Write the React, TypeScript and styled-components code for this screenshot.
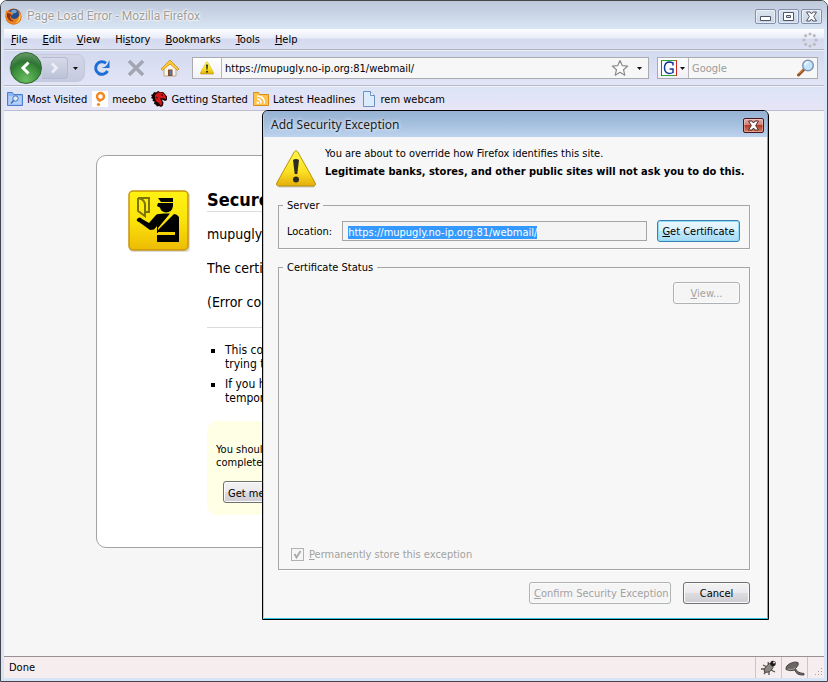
import React, { useEffect, useRef } from "react";
import styled, { createGlobalStyle, css } from "styled-components";

const uiFont = '"DejaVu Sans Condensed", "DejaVu Sans", sans-serif';

const GlobalStyle = createGlobalStyle`
  *, *::before, *::after { box-sizing: border-box; }
  body { margin: 0; background: #fff; font: 11px/14px ${uiFont}; color: #000; }
  button, input { font: inherit; color: inherit; margin: 0; padding: 0; }
  p, h1, h2, ul { margin: 0; padding: 0; }
`;

const Window = styled.div`
  position: relative;
  display: flex;
  flex-direction: column;
  min-height: 100vh;
  padding: 0 3px 3px;
  border: 1px solid #45454a;
  border-radius: 7px 7px 0 0;
  background: #d5e4f6;
  overflow: hidden;
`;

const TitleBar = styled.header`
  display: flex;
  align-items: center;
  gap: 5px;
  height: 28px;
  margin: 0 -3px;
  padding: 2px 5px 0 4px;
  background: linear-gradient(#bdc9da, #ccd8e8 55%, #d9e6f6);
`;

const WindowTitle = styled.h1`
  flex: 1;
  font: 12px/16px Roboto, "Noto Sans", sans-serif;
  color: #9d9d9a;
  text-shadow: 0 0 3px #fff, 0 0 3px #fff, 0 0 2px #fff;
`;

const WindowControls = styled.div`
  display: flex;
  gap: 2px;
`;

const ControlButton = styled.button<{ $close?: boolean }>`
  display: grid;
  place-items: center;
  width: 21px;
  height: 15px;
  border: 1px solid ${(p) => (p.$close ? "#47141c" : "#8290ac")};
  border-radius: 2px;
  background: ${(p) =>
    p.$close
      ? "linear-gradient(#e9aaa3, #d27e73 45%, #b53a25 50%, #d57a60)"
      : "linear-gradient(#dbe3ef, #c9d5e6)"};
  box-shadow: inset 0 0 0 1px ${(p) => (p.$close ? "#ffffff50" : "#ffffff80")};
`;

const MenuBar = styled.nav`
  display: flex;
  align-items: center;
  gap: 15px;
  height: 21px;
  padding: 2px 6px 0 7px;
  background: linear-gradient(#fdfdff, #e9ecf8 45%, #d4d9ee 50%, #dadff2);
  border-bottom: 1px solid #adb0b8;
`;

const MenuItem = styled.button`
  border: 0;
  background: none;
  white-space: nowrap;
`;

const Spacer = styled.span`
  flex: 1;
`;

const Toolbar = styled.div`
  display: flex;
  align-items: center;
  height: 36px;
  padding: 0 6px 0 5px;
  background: linear-gradient(#d3daef, #e2e5f6);
  border-top: 1px solid #eef0fa;
  border-bottom: 1px solid #b6b9c6;
`;

const NavGroup = styled.div`
  display: flex;
  align-items: center;
  height: 28px;
  width: 76px;
  border: 1px solid #c3c8db;
  border-radius: 14px 8px 8px 14px;
  background: linear-gradient(#d2d6e8, #c5cbe0);
`;

const NavButton = styled.button<{ $kind?: "back" | "forward" | "menu" }>`
  display: grid;
  place-items: center;
  flex: none;
  border: 0;
  background: none;
  width: 34px;
  height: 28px;
  ${(p) =>
    p.$kind === "back" &&
    css`
      width: 32px;
      height: 32px;
      border: 1px solid #2c6430;
      border-radius: 50%;
      background: radial-gradient(circle at 50% 90%, #6bbd62, #3c8f3c 45%, #2f7533 60%, #83ac80);
    `}
  ${(p) =>
    p.$kind === "forward" &&
    css`
      width: 26px;
      height: 22px;
      border: 1px solid #b4bbd0;
      border-left: 0;
      border-radius: 0 4px 4px 0;
      background: linear-gradient(#d5d9e8, #bcc3d8);
    `}
  ${(p) =>
    p.$kind === "menu" &&
    css`
      width: 15px;
    `}
`;

const Field = styled.div<{ $grow?: boolean }>`
  display: flex;
  align-items: stretch;
  height: 22px;
  min-width: 0;
  flex: ${(p) => (p.$grow ? "1 1 0" : "0 0 161px")};
  margin-left: ${(p) => (p.$grow ? "5px" : "8px")};
  border: 1px solid #a9abb0;
  background: #f7f7f7;
`;

const FieldButton = styled.button<{ $divider?: boolean; $width?: string }>`
  display: flex;
  align-items: center;
  justify-content: center;
  gap: 3px;
  flex: none;
  width: ${(p) => p.$width ?? "22px"};
  border: 0;
  border-right: ${(p) => (p.$divider ? "1px solid #b5b7bd" : "0")};
  background: ${(p) => (p.$divider ? "linear-gradient(#fff, #f2f0f8)" : "none")};
`;

const FieldInput = styled.input`
  flex: 1;
  min-width: 0;
  width: 0;
  border: 0;
  outline: 0;
  padding: 2px 3px 0;
  background: none;
  &::placeholder {
    color: #9b9b98;
    opacity: 1;
  }
`;

const Bookmarks = styled.nav`
  display: flex;
  align-items: center;
  gap: 5px;
  height: 25px;
  padding: 0 3px;
  background: linear-gradient(#dbe4f6, #e7e5f6);
  border-top: 1px solid #f3f4fb;
  border-bottom: 1px solid #bcbfd2;
`;

const Bookmark = styled.a`
  display: flex;
  align-items: center;
  gap: 4px;
  color: #000;
  text-decoration: none;
  white-space: nowrap;

  span {
    padding-top: 2px;
  }
`;

const Page = styled.main`
  flex: 1;
  padding: 44px 92px;
  background: #f6f6f6;
`;

const ErrorCard = styled.section`
  display: flex;
  gap: 17px;
  min-height: 393px;
  padding: 34px 31px 0;
  border: 1px solid #a3a3a3;
  border-radius: 10px;
  background: #fff;
`;

const ErrorContent = styled.div`
  flex: 1;
  min-width: 0;
  overflow: hidden;
  white-space: nowrap;
  font-size: 14px;
  line-height: 18px;
`;

const ErrorTitle = styled.h2`
  margin-bottom: 13px;
  font-size: 18px;
  line-height: 20px;
  padding-bottom: 1px;
  border-bottom: 1px solid #dcdcdc;
`;

const ErrorText = styled.p`
  margin-bottom: 16px;
`;

const Advice = styled.ul`
  margin-top: 14px;
  padding: 15px 0 0 18px;
  border-top: 1px solid #dcdcdc;
  list-style: square;
  font-size: 12px;
  line-height: 14px;

  li + li {
    margin-top: 6px;
  }
`;

const Caution = styled.div`
  margin-top: 16px;
  padding: 22px 9px 12px;
  border-radius: 10px;
  background: #ffffe5;
  font-size: 11px;
  line-height: 13px;
`;

const ButtonRow = styled.div<{ $end?: boolean }>`
  display: flex;
  justify-content: ${(p) => (p.$end ? "flex-end" : "space-between")};
  gap: 12px;
  margin: ${(p) => (p.$end ? "12px 0 0" : "12px 7px 0")};
`;

const PushButton = styled.button<{ $primary?: boolean; $width?: string }>`
  flex: none;
  height: 22px;
  width: ${(p) => p.$width ?? "auto"};
  padding: 2px 4px 0;
  white-space: nowrap;
  border: 1px solid ${(p) => (p.$primary ? "#3c7fb1" : "#707070")};
  border-radius: 3px;
  background: ${(p) =>
    p.$primary
      ? "linear-gradient(#eaf6fd, #dcf1fc 48%, #bfe7fb 52%, #a9dcf6)"
      : "linear-gradient(#f3f3f3, #ebe9ee 48%, #dddce1 52%, #cfcdd3)"};
  box-shadow: inset 0 0 0 1px ${(p) => (p.$primary ? "#8fdcf8" : "#fbfbfb")};

  &:disabled {
    color: #a2a2a0;
    border-color: #adb2b5;
    background: #f6f5f6;
  }
`;

const StatusBar = styled.footer`
  display: flex;
  align-items: stretch;
  height: 22px;
  padding-left: 5px;
  border-top: 1px solid #989094;
  background: #f6edef;
  line-height: 22px;
`;

const StatusCell = styled.span<{ $grip?: boolean }>`
  display: grid;
  place-items: ${(p) => (p.$grip ? "end" : "center")};
  width: ${(p) => (p.$grip ? "17px" : "26px")};
  border-left: 1px solid #ccc4c8;
`;

const Dialog = styled.section`
  position: absolute;
  top: 109px;
  left: 261px;
  width: 507px;
  padding: 0 1px 1px;
  border: 1px solid #000;
  border-radius: 6px 6px 0 0;
  background: #f7f7f7;
  box-shadow: inset 1px 0 #b5cdea, inset -1px -1px #2fc3e2;
  overflow: hidden;
`;

const DialogTitleBar = styled.header`
  display: flex;
  align-items: center;
  height: 26px;
  padding: 2px 3px 0 7px;
  background: linear-gradient(#96b2d2, #a5bfde 50%, #bdd3ef);
`;

const DialogTitle = styled.h2`
  flex: 1;
  font: 12px/16px "Noto Sans", "Open Sans", sans-serif;
  color: #1c1c24;
  text-shadow: 0 0 4px #ffffffb0, 0 0 4px #ffffffb0;
`;

const DialogBody = styled.div`
  padding: 8px 17px 14px 14px;
`;

const Notice = styled.div`
  display: flex;
  gap: 9px;
  height: 53px;
  white-space: nowrap;
`;

const NoticeText = styled.div`
  line-height: 18px;
`;

const WarningSlot = styled.div`
  padding-top: 4px;
  margin-left: -2px;
`;

const GroupBox = styled.fieldset<{ $tall?: boolean }>`
  min-width: 0;
  margin: 0 0 ${(p) => (p.$tall ? "0" : "11px")};
  padding: ${(p) => (p.$tall ? "8px 9px 7px" : "8px 9px 6px")};
  border: 1px solid #a5a5a5;
  box-shadow: 1px 1px #fff;

  legend {
    margin-left: -5px;
    padding: 0 4px;
    height: 14px;
    line-height: 16px;
  }
`;

const LocationRow = styled.div`
  display: flex;
  align-items: center;
  gap: 10px;

  label {
    margin-left: -1px;
    padding-top: 2px;
  }
`;

const LocationInput = styled.input`
  flex: 1;
  min-width: 0;
  height: 20px;
  padding: 2px 5px 0;
  border: 1px solid #a5a5a5;
  outline: 0;
  background: #f4f4f4;
  &::selection {
    color: #fff;
    background: #3399ff;
  }
`;

const StatusArea = styled.div`
  display: flex;
  flex-direction: column;
  align-items: flex-end;
  justify-content: space-between;
  min-height: 280px;
`;

const CheckLabel = styled.label`
  display: flex;
  align-items: center;
  align-self: flex-start;
  gap: 5px;
  margin-left: 3px;
  color: #a2a2a0;

  span {
    padding-top: 2px;
  }
`;

const CheckInput = styled.input`
  appearance: none;
  width: 13px;
  height: 13px;
  border: 1px solid #b1b1b1;
  background: #f6f6f6
    url("data:image/svg+xml,%3Csvg xmlns='http://www.w3.org/2000/svg' viewBox='0 0 11 11'%3E%3Cpath d='M2.500 5l2 3.500L8.500 2' fill='none' stroke='%23aaa8ae' stroke-width='1.800'/%3E%3C/svg%3E")
    center / 11px 11px no-repeat;
`;

const Caret = () => (
  <svg width="5" height="3" viewBox="0 0 5 3" aria-hidden="true">
    <path d="M0 0h5L2.500 3z" fill="#111" />
  </svg>
);

const FirefoxIcon = () => (
  <svg width="17" height="17" viewBox="0 0 17 17" aria-hidden="true">
    <circle cx="8.500" cy="8.500" r="8" fill="#c65a16" />
    <circle cx="9" cy="7" r="6" fill="#244c8c" />
    <path d="M6 3q3-2.500 6 0l-1 2-3 .5-1 2z" fill="#6aa5d4" />
    <path d="M1 2l1.500 2Q4 3 6 4l2 1.500L7 7 5.500 8q.5 3 4 3 4-.5 4.500-4 0-3-1.500-4.500Q17 5 16.300 10 15 16 8.500 16.500 1 16 .5 9 .3 5 1 2z" fill="#e98225" />
    <path d="M2 5l3 .5L7 7 5 8q0 4 4 5-5 1-7-4z" fill="#8f2f14" />
    <path d="M15.500 6q1 7-5 9.500 3.500-3 3.800-7z" fill="#ffd14a" />
  </svg>
);

const CrossGlyph = ({ fill = "#fff", stroke = "#50566a" }) => (
  <svg width="13" height="11" viewBox="0 0 13 11" aria-hidden="true">
    <path d="M1.500 1H5l1.500 2L8 1h3.500L8.700 5.500l2.800 4.500H8L6.500 8 5 10H1.500l2.800-4.500z" fill={fill} stroke={stroke} />
  </svg>
);

const WarningIcon = ({ size = 40 }: { size?: number }) => (
  <svg width={size} height={size} viewBox="0 0 40 40" aria-hidden="true">
    <defs>
      <linearGradient id="warn" x1="0" y1="0" x2="0" y2="1">
        <stop offset="0" stopColor="#fff84a" />
        <stop offset="0.600" stopColor="#fbe022" />
        <stop offset="1" stopColor="#e2ad0a" />
      </linearGradient>
    </defs>
    <path d="M2 36.500h37l-1 2H3z" fill="#00000030" />
    <path d="M18.200 3q1.800-3 3.600 0L39 33.500q1.500 3.500-2 3.500H3q-3.500 0-2-3.500z" fill="url(#warn)" stroke="#b8930c" />
    <path d="M17 11q3-2 6 0l-1.700 14h-2.600z" fill="#2e2c22" />
    <circle cx="20" cy="30.500" r="3" fill="#2e2c22" />
  </svg>
);

const Throbber = () => (
  <svg width="16" height="16" viewBox="0 0 16 16" fill="#bcbcc0" aria-hidden="true">
    <circle cx="8" cy="2" r="1.600" />
    <circle cx="12.300" cy="3.700" r="1.600" />
    <circle cx="14" cy="8" r="1.600" />
    <circle cx="12.300" cy="12.300" r="1.600" />
    <circle cx="8" cy="14" r="1.600" />
    <circle cx="3.700" cy="12.300" r="1.600" />
    <circle cx="2" cy="8" r="1.600" />
    <circle cx="3.700" cy="3.700" r="1.600" />
  </svg>
);

const ChevronIcon = ({ right = false }) => (
  <svg width="16" height="16" viewBox="0 0 16 16" aria-hidden="true">
    <path
      d={right ? "M5 3.500L9.500 8 5 12.500" : "M10.500 2.500L5 8l5.500 5.500"}
      fill="none"
      stroke={right ? "#eef0f8" : "#fff"}
      strokeWidth={right ? 2.5 : 3}
    />
  </svg>
);

const ReloadIcon = () => (
  <svg width="18" height="18" viewBox="0 0 18 18" aria-hidden="true">
    <path d="M13 4.200A6.300 6.300 0 1 0 14.500 12" fill="none" stroke="#1d6fd6" strokeWidth="3" />
    <path d="M16.500 1v8H8.700q4-1 5.300-3z" fill="#1d6fd6" />
  </svg>
);

const StopIcon = () => (
  <svg width="18" height="18" viewBox="0 0 18 18" aria-hidden="true">
    <path d="M2 2l14 14M16 2L2 16" stroke="#a3a6b2" strokeWidth="3.500" />
  </svg>
);

const HomeIcon = () => (
  <svg width="20" height="18" viewBox="0 0 20 18" aria-hidden="true">
    <path d="M4 8.500L10 3l6 5.500v8.500H4z" fill="#f7f4ee" stroke="#b7a98e" />
    <path d="M8 17v-6.500h4.500V17z" fill="#8a4b22" />
    <path d="M9.500 11.500h2V16h-2z" fill="#5b7db5" />
    <path d="M1 10l9-9 9 9-1.500 1.300L10 5l-7.500 6.300z" fill="#ffc938" stroke="#c88a16" strokeWidth=".8" />
  </svg>
);

const StarIcon = () => (
  <svg width="18" height="18" viewBox="0 0 18 18" aria-hidden="true">
    <path d="M9 1.500l2.200 5.100 5.500.5-4.200 3.600 1.300 5.500L9 13.300l-4.800 2.900 1.300-5.500L1.300 7.100l5.500-.5z" fill="#fbfbfb" stroke="#8b8b8b" strokeWidth="1.200" strokeLinejoin="round" />
  </svg>
);

const GoogleIcon = () => (
  <svg width="16" height="16" viewBox="0 0 16 16" aria-hidden="true">
    <path d="M0 0h16v16H0z" fill="#fff" />
    <path d="M.5 0v16" stroke="#2b5bd0" />
    <path d="M0 .5h15" stroke="#2fa52f" />
    <path d="M15.500 0v16" stroke="#d8251c" />
    <path d="M1 15.500h14" stroke="#2fa52f" />
    <path d="M12 5.500V3q-2-1-4-1-4.500.5-4.500 5.800T8 13.500q2.500 0 4-1V9H8.500" fill="none" stroke="#15379e" strokeWidth="1.500" />
  </svg>
);

const SearchIcon = () => (
  <svg width="18" height="18" viewBox="0 0 18 18" aria-hidden="true">
    <path d="M1.500 16L7 10.500" stroke="#9c5322" strokeWidth="3" strokeLinecap="round" />
    <path d="M2 14.500l4-4" stroke="#e49545" strokeWidth="1" />
    <circle cx="11" cy="6.500" r="5.300" fill="#c3e6fb" stroke="#7f95b8" strokeWidth="1.500" />
    <path d="M8 6q.5-3 3.500-3" fill="none" stroke="#fff" strokeWidth="1.500" />
  </svg>
);

const MostVisitedIcon = () => (
  <svg width="16" height="16" viewBox="0 0 16 16" aria-hidden="true">
    <path d="M.5 1.500h5l1 2h9v11H.5z" fill="#8fb7ef" stroke="#4a7ed0" />
    <path d="M1.500 5h13v8.500h-13z" fill="#b4d0f7" />
    <circle cx="8.500" cy="7.500" r="2.700" fill="#dcebfc" stroke="#3f70c0" />
    <path d="M6.500 9.500L4 12.500" stroke="#3f70c0" strokeWidth="1.500" />
  </svg>
);

const MeeboIcon = () => (
  <svg width="16" height="16" viewBox="0 0 16 16" aria-hidden="true">
    <path d="M0 0h16v16H0z" fill="#fff" />
    <circle cx="8.500" cy="5.500" r="3.500" fill="none" stroke="#f5871f" strokeWidth="2.400" />
    <path d="M5.500 8.500l3 2" stroke="#f5871f" strokeWidth="2" />
    <circle cx="6.500" cy="13.500" r="1.600" fill="#f5871f" />
  </svg>
);

const DragonIcon = () => (
  <svg width="16" height="16" viewBox="0 0 16 16" aria-hidden="true">
    <path d="M0 4l2-1 1-2 2 .5L7 0l2 1 3 0 2 2 2 2.500V9l-2 1-3-1.500.5 1.500 1 1.500-.5 3-2 1.500-2-1-2 .5-1.500-2L3 13l.5-2.500-2-.5.5-2L0 7l1-1.500z" fill="#1b0504" />
    <path d="M4 4l3-2.500h4L14 4l1 2.500V8l-3.500-1L9 7.500 10.500 10l.5 3-1.500 1.500L8 12 5.500 10.500 4 8z" fill="#d3171b" />
    <path d="M10 4h2M5 6l2 1.500" stroke="#1b0504" />
  </svg>
);

const FeedIcon = () => (
  <svg width="16" height="16" viewBox="0 0 16 16" aria-hidden="true">
    <path d="M.5 1.500h5l1 2h9v11H.5z" fill="#ffc24d" stroke="#d98e1c" />
    <path d="M4 8q4 0 4 4.500M4 5q7.500 0 7.500 7.500" fill="none" stroke="#fff" strokeWidth="1.500" />
    <circle cx="4.800" cy="11.700" r="1.200" fill="#fff" />
  </svg>
);

const PageIcon = () => (
  <svg width="16" height="16" viewBox="0 0 16 16" aria-hidden="true">
    <path d="M2.500.5h7l4 4v11h-11z" fill="#dcecfd" stroke="#6c8fc4" />
    <path d="M9.500.5v4h4" fill="#fff" stroke="#6c8fc4" />
  </svg>
);

const InspectorIcon = () => (
  <svg width="62" height="62" viewBox="0 0 62 62" aria-hidden="true">
    <defs>
      <linearGradient id="sign" x1="0" y1="0" x2="0" y2="1">
        <stop offset="0" stopColor="#fff314" />
        <stop offset="0.500" stopColor="#fbe30a" />
        <stop offset="1" stopColor="#edbb04" />
      </linearGradient>
    </defs>
    <rect x="1" y="2" width="61" height="60" rx="4" fill="#00000022" />
    <rect x="1" y="1" width="59" height="59" rx="4" fill="url(#sign)" stroke="#c8950f" strokeWidth="1.500" />
    <g fill="none" stroke="#7d7406" strokeWidth="2">
      <path d="M14 8h7v14h-5" />
      <path d="M10 8v13l7 5V14q-1-5-7-6h4" />
    </g>
    <path d="M30 8h15v4H33zM30 13h15v3q-1 6.500-7 6.500-5-.5-6-5l-3-1.500z" fill="#000" />
    <path d="M9 29q3-3 5 0l7 4 7-8q2-1.500 8-1.500h6L30 38v5h-1V36l-3 3.500-4 .5-11-8q-3-1-2-3z" fill="#000" />
    <path d="M46 24q3 0 5 3v25H29v-7h18v-3H29v-1z" fill="#000" />
  </svg>
);

const BugIcon = () => (
  <svg width="18" height="18" viewBox="0 0 18 18" aria-hidden="true">
    <path d="M3 6l4 2M1 10l5 0M4 15l3-4M8 3l1 4M9 16v-4M15 13l-4-2" stroke="#55524f" strokeWidth="1.300" />
    <path d="M4.500 13Q3 9 9.500 4.500q4 0 3.500 4-3 6-8.500 4.500z" fill="#8b867f" stroke="#4a4640" />
    <circle cx="13" cy="4.500" r="2.700" fill="#1d1b1a" />
    <circle cx="14" cy="3.500" r=".9" fill="#fff" />
  </svg>
);

const HatIcon = () => (
  <svg width="20" height="16" viewBox="0 0 20 16" aria-hidden="true">
    <path d="M1 9.500Q0 6 5 3.500 10 1 13 2.500q1.500 2-2.500 6 1.500 4.500 8.500 5v1.500q-8 .5-9-5-5 1.500-9-.5z" fill="#6b6764" stroke="#4a4644" />
    <path d="M3 9q5 1.500 7.500-1.500" fill="none" stroke="#aaa5a2" />
  </svg>
);

const GripIcon = () => (
  <svg width="10" height="10" viewBox="0 0 10 10" fill="#aaa2a6" aria-hidden="true">
    <path d="M7 0h1v1H7zM4 3h1v1H4zM7 3h1v1H7zM1 6h1v1H1zM4 6h1v1H4zM7 6h1v1H7z" />
  </svg>
);

const menus: [string, string, string][] = [
  ["", "F", "ile"],
  ["", "E", "dit"],
  ["", "V", "iew"],
  ["Hi", "s", "tory"],
  ["", "B", "ookmarks"],
  ["", "T", "ools"],
  ["", "H", "elp"],
];

const bookmarks = [
  { label: "Most Visited", Icon: MostVisitedIcon },
  { label: "meebo", Icon: MeeboIcon },
  { label: "Getting Started", Icon: DragonIcon },
  { label: "Latest Headlines", Icon: FeedIcon },
  { label: "rem webcam", Icon: PageIcon },
];

const siteUrl = "https://mupugly.no-ip.org:81/webmail/";

function SecurityDialog() {
  const location = useRef<HTMLInputElement>(null);

  useEffect(() => {
    location.current?.focus();
    location.current?.select();
  }, []);

  return (
    <Dialog role="dialog" aria-labelledby="dialog-title">
      <DialogTitleBar>
        <DialogTitle id="dialog-title">Add Security Exception</DialogTitle>
        <ControlButton $close aria-label="Close dialog">
          <CrossGlyph stroke="#4d2a2c" />
        </ControlButton>
      </DialogTitleBar>
      <DialogBody>
        <Notice>
          <WarningSlot>
            <WarningIcon />
          </WarningSlot>
          <NoticeText>
            <p>You are about to override how Firefox identifies this site.</p>
            <p>
              <b>Legitimate banks, stores, and other public sites will not ask you to do this.</b>
            </p>
          </NoticeText>
        </Notice>
        <GroupBox>
          <legend>Server</legend>
          <LocationRow>
            <label htmlFor="location">Location:</label>
            <LocationInput id="location" ref={location} defaultValue={siteUrl} spellCheck={false} />
            <PushButton $primary $width="83px">
              <u>G</u>et Certificate
            </PushButton>
          </LocationRow>
        </GroupBox>
        <GroupBox $tall>
          <legend>Certificate Status</legend>
          <StatusArea>
            <PushButton disabled $width="67px">
              <u>V</u>iew...
            </PushButton>
            <CheckLabel>
              <CheckInput type="checkbox" defaultChecked disabled />
              <span>
                <u>P</u>ermanently store this exception
              </span>
            </CheckLabel>
          </StatusArea>
        </GroupBox>
        <ButtonRow $end>
          <PushButton disabled $width="142px">
            <u>C</u>onfirm Security Exception
          </PushButton>
          <PushButton $width="67px">Cancel</PushButton>
        </ButtonRow>
      </DialogBody>
    </Dialog>
  );
}

export default function App() {
  return (
    <>
      <GlobalStyle />
      <Window>
        <TitleBar>
          <FirefoxIcon />
          <WindowTitle>Page Load Error - Mozilla Firefox</WindowTitle>
          <WindowControls>
            <ControlButton aria-label="Minimize">
              <svg width="11" height="9" viewBox="0 0 11 9">
                <path d="M.5 4.500h10v4H.5z" fill="#fff" stroke="#50566a" />
              </svg>
            </ControlButton>
            <ControlButton aria-label="Maximize">
              <svg width="11" height="9" viewBox="0 0 11 9">
                <path d="M.5.5h10v8H.5zM3.500 3.500v2h4v-2z" fill="#fff" fillRule="evenodd" stroke="#50566a" />
              </svg>
            </ControlButton>
            <ControlButton aria-label="Close">
              <CrossGlyph />
            </ControlButton>
          </WindowControls>
        </TitleBar>
        <MenuBar>
          {menus.map(([before, key, after]) => (
            <MenuItem key={before + key + after}>
              {before}
              <u>{key}</u>
              {after}
            </MenuItem>
          ))}
          <Spacer />
          <Throbber />
        </MenuBar>
        <Toolbar>
          <NavGroup>
            <NavButton $kind="back" aria-label="Back">
              <ChevronIcon />
            </NavButton>
            <NavButton $kind="forward" aria-label="Forward">
              <ChevronIcon right />
            </NavButton>
            <NavButton $kind="menu" aria-label="Recent pages">
              <Caret />
            </NavButton>
          </NavGroup>
          <NavButton aria-label="Reload">
            <ReloadIcon />
          </NavButton>
          <NavButton aria-label="Stop">
            <StopIcon />
          </NavButton>
          <NavButton aria-label="Home">
            <HomeIcon />
          </NavButton>
          <Field $grow>
            <FieldButton $divider $width="29px" aria-label="Site identity">
              <WarningIcon size={14} />
            </FieldButton>
            <FieldInput aria-label="Address" defaultValue={siteUrl} spellCheck={false} />
            <FieldButton aria-label="Bookmark this page">
              <StarIcon />
            </FieldButton>
            <FieldButton $width="17px" aria-label="Show history">
              <Caret />
            </FieldButton>
          </Field>
          <Field>
            <FieldButton $divider $width="31px" aria-label="Search engine">
              <GoogleIcon />
              <Caret />
            </FieldButton>
            <FieldInput aria-label="Search" placeholder="Google" />
            <FieldButton aria-label="Go">
              <SearchIcon />
            </FieldButton>
          </Field>
        </Toolbar>
        <Bookmarks>
          {bookmarks.map(({ label, Icon }) => (
            <Bookmark href="#" key={label}>
              <Icon />
              <span>{label}</span>
            </Bookmark>
          ))}
        </Bookmarks>
        <Page>
          <ErrorCard>
            <InspectorIcon />
            <ErrorContent>
              <ErrorTitle>Secure</ErrorTitle>
              <ErrorText>mupugly</ErrorText>
              <ErrorText>The certifi</ErrorText>
              <ErrorText>(Error cod</ErrorText>
              <Advice>
                <li>
                  This cou
                  <br />
                  trying to
                </li>
                <li>
                  If you ha
                  <br />
                  tempora
                </li>
              </Advice>
              <Caution>
                <p>
                  You should
                  <br />
                  completely
                </p>
                <ButtonRow>
                  <PushButton>Get me out</PushButton>
                </ButtonRow>
              </Caution>
            </ErrorContent>
          </ErrorCard>
        </Page>
        <StatusBar>
          Done
          <Spacer />
          <StatusCell>
            <BugIcon />
          </StatusCell>
          <StatusCell>
            <HatIcon />
          </StatusCell>
          <StatusCell $grip>
            <GripIcon />
          </StatusCell>
        </StatusBar>
        <SecurityDialog />
      </Window>
    </>
  );
}
